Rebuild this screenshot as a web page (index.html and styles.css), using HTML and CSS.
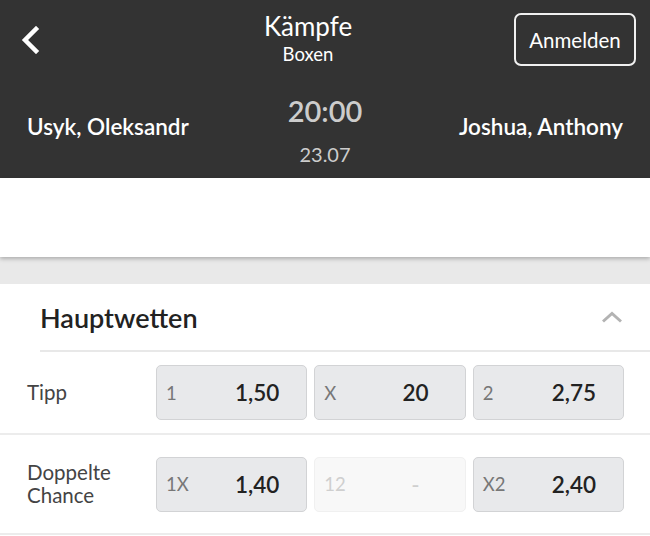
FILE: index.html
```html
<!DOCTYPE html>
<html lang="de">
<head>
<meta charset="utf-8">
<link rel="stylesheet" href="styles.css">
</head>
<body>
<header class="header">
  <div class="topbar">
    <div class="back">
      <svg width="22" height="28" viewBox="0 0 22 28"><path d="M17 3 L6 14 L17 25" fill="none" stroke="#fff" stroke-width="4.5" stroke-linecap="square" stroke-linejoin="miter"/></svg>
    </div>
    <div class="title">
      <div class="title-main">Kämpfe</div>
      <div class="title-sub">Boxen</div>
    </div>
    <button class="login">Anmelden</button>
  </div>
  <div class="match">
    <div class="team">Usyk, Oleksandr</div>
    <div class="when">
      <div class="time">20:00</div>
      <div class="date">23.07</div>
    </div>
    <div class="team team-right">Joshua, Anthony</div>
  </div>
</header>
<div class="scoreboard"></div>
<div class="spacer"></div>
<section class="market">
  <div class="market-head">
    <h2>Hauptwetten</h2>
    <svg class="chev" width="22" height="12" viewBox="0 0 22 12"><path d="M2 10.5 L11 2.5 L20 10.5" fill="none" stroke="#b3b3b3" stroke-width="3"/></svg>
  </div>
  <div class="row">
    <div class="row-label">Tipp</div>
    <div class="odds">
      <div class="odd"><span class="odd-key">1</span><span class="odd-val">1,50</span></div>
      <div class="odd"><span class="odd-key">X</span><span class="odd-val">20</span></div>
      <div class="odd"><span class="odd-key">2</span><span class="odd-val">2,75</span></div>
    </div>
  </div>
  <div class="row">
    <div class="row-label">Doppelte<br>Chance</div>
    <div class="odds">
      <div class="odd"><span class="odd-key">1X</span><span class="odd-val">1,40</span></div>
      <div class="odd odd-off"><span class="odd-key">12</span><span class="odd-val">-</span></div>
      <div class="odd"><span class="odd-key">X2</span><span class="odd-val">2,40</span></div>
    </div>
  </div>
</section>
</body>
</html>
```

FILE: styles.css
```css
* { box-sizing: border-box; }
html, body { margin: 0; padding: 0; }
body {
  width: 650px;
  font-family: Lato, "Noto Sans", sans-serif;
  background: #fff;
  color: #222;
  overflow: hidden;
}
.header {
  background: #333333;
  height: 178px;
  color: #fff;
}
.topbar {
  display: grid;
  grid-template-columns: 102px 1fr auto;
  align-items: start;
  padding: 13px 14px 0 0;
  height: 85px;
}
.back {
  padding: 13px 0 0 19px;
}
.back svg { display: block; }
.title {
  text-align: center;
  margin-top: -1px;
}
.title-main {
  font-size: 26px;
  line-height: 28px;
}
.title-sub {
  font-size: 18.5px;
  line-height: 22px;
  margin-top: 3px;
}
.login {
  font-family: inherit;
  font-size: 20.5px;
  color: #fff;
  background: transparent;
  border: 2px solid #f0f0f0;
  border-radius: 7px;
  width: 122px;
  height: 53px;
  padding: 0;
}
.match {
  display: grid;
  grid-template-columns: 1fr auto 1fr;
  align-items: center;
  padding: 0 27px;
  height: 93px;
}
.team {
  font-size: 22.5px;
  font-weight: 600;
  padding-bottom: 11px;
}
.team-right { text-align: right; }
.when {
  text-align: center;
  color: #cccccc;
  padding-bottom: 4px;
}
.time {
  font-size: 29px;
  font-weight: 600;
  line-height: 34px;
}
.date {
  font-size: 20px;
  line-height: 22px;
  margin-top: 15px;
}
.scoreboard {
  height: 79px;
  background: #fff;
  position: relative;
  z-index: 1;
  box-shadow: 0 2px 4px rgba(0,0,0,0.25);
}
.spacer {
  height: 27px;
  background: #e9e9e9;
}
.market-head {
  display: flex;
  align-items: center;
  justify-content: space-between;
  height: 68px;
  margin-left: 40px;
  padding-right: 27px;
  border-bottom: 2px solid #e8e8e8;
}
.market-head h2 {
  margin: 0;
  font-size: 27px;
  font-weight: 600;
  color: #222;
}
.chev { display: block; }
.row {
  display: flex;
  align-items: center;
  padding: 13px 26px 13px 0;
  border-bottom: 2px solid #ececec;
}
.row-label {
  flex: 0 0 156px;
  padding: 13px 0 13px 27px;
  font-size: 20.5px;
  line-height: 23px;
  color: #444;
}
.odds {
  flex: 1;
  display: grid;
  grid-template-columns: repeat(3, 1fr);
  gap: 7px;
}
.odd {
  display: flex;
  align-items: center;
  height: 55px;
  background: #e8e9eb;
  border: 1px solid #d2d3d5;
  border-radius: 5px;
}
.odd-key {
  width: 52px;
  padding-left: 9px;
  font-size: 18.5px;
  color: #777;
}
.odd-val {
  flex: 1;
  text-align: center;
  font-size: 22.5px;
  font-weight: 600;
  color: #222;
  padding-right: 1px;
}
.odd-off {
  background: #f8f8f8;
  border-color: #f0f0f0;
}
.odd-off .odd-key, .odd-off .odd-val {
  color: #cfcfcf;
  font-weight: 400;
}
```
